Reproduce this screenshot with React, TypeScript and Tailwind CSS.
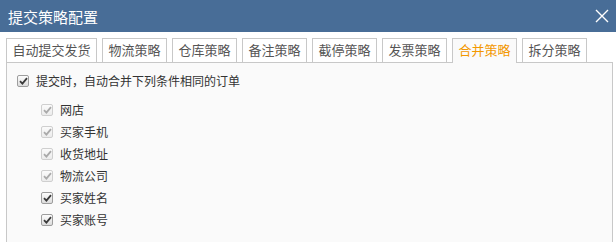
import type { FC } from "react";

const tabs = ["自动提交发货", "物流策略", "仓库策略", "备注策略", "截停策略", "发票策略", "合并策略", "拆分策略"];
const active = "合并策略";

const conditions = [
  { label: "网店", disabled: true },
  { label: "买家手机", disabled: true },
  { label: "收货地址", disabled: true },
  { label: "物流公司", disabled: true },
  { label: "买家姓名", disabled: false },
  { label: "买家账号", disabled: false },
];

const Check: FC<{ disabled?: boolean }> = ({ disabled }) => (
  <span
    className={
      disabled
        ? "flex h-[12px] w-[12px] shrink-0 items-center justify-center rounded-[2px] border border-[#cfcfcf] bg-gradient-to-b from-[#fbfbfb] to-[#ececec]"
        : "flex h-[12px] w-[12px] shrink-0 items-center justify-center rounded-[2px] border border-[#9d9d9d] bg-gradient-to-b from-[#fdfdfd] to-[#dcdcdc]"
    }
  >
    <svg width="9" height="8" viewBox="0 0 9 8">
      <path
        d="M1 4.2 L3.4 6.6 L8 1.2"
        fill="none"
        stroke={disabled ? "#aaaaaa" : "#3a3a3a"}
        strokeWidth="1.8"
      />
    </svg>
  </span>
);

export default function App() {
  return (
    <div className="h-[242px] w-[616px] overflow-hidden bg-white font-['Noto_Sans_CJK_SC','Noto_Sans',sans-serif]">
      {/* title bar */}
      <div className="flex h-[32px] items-center justify-between bg-[#486d97] pl-[8px] pr-[6px]">
        <span className="text-[15px] leading-none text-white">提交策略配置</span>
        <svg width="14" height="14" viewBox="0 0 14 14" className="mr-[1px]">
          <path d="M1 1 L13 13 M13 1 L1 13" stroke="#ffffff" strokeWidth="1.4" />
        </svg>
      </div>

      {/* tabs */}
      <div className="mt-[6px] flex gap-[5px] pl-[6px]">
        {tabs.map((t, i) => (
          <div
            key={t}
            className={
              (i === 0 ? "w-[91px] " : "w-[65px] ") +
              (t === active
                ? "relative z-10 -mb-px h-[25px] border border-b-0 border-[#c8c8c8] bg-[#fafafa] text-[#f39800]"
                : "h-[24px] border border-b-0 border-[#c8c8c8] bg-white text-[#555555]") +
              " flex items-start justify-center pt-[2px] text-[13px] leading-[18px]"
            }
          >
            {t}
          </div>
        ))}
      </div>

      {/* panel */}
      <div className="mr-[3px] ml-[6px] h-[200px] border border-[#c8c8c8] bg-[#fafafa] pt-[7px] pl-[10px] text-[12px] text-[#333333]">
        <div className="flex h-[22px] items-center gap-[7px]">
          <Check />
          <span>提交时，自动合并下列条件相同的订单</span>
        </div>
        <div className="mt-[7px] flex flex-col pl-[24px]">
          {conditions.map((c) => (
            <div key={c.label} className="flex h-[22px] items-center gap-[7px]">
              <Check disabled={c.disabled} />
              <span>{c.label}</span>
            </div>
          ))}
        </div>
      </div>
    </div>
  );
}
